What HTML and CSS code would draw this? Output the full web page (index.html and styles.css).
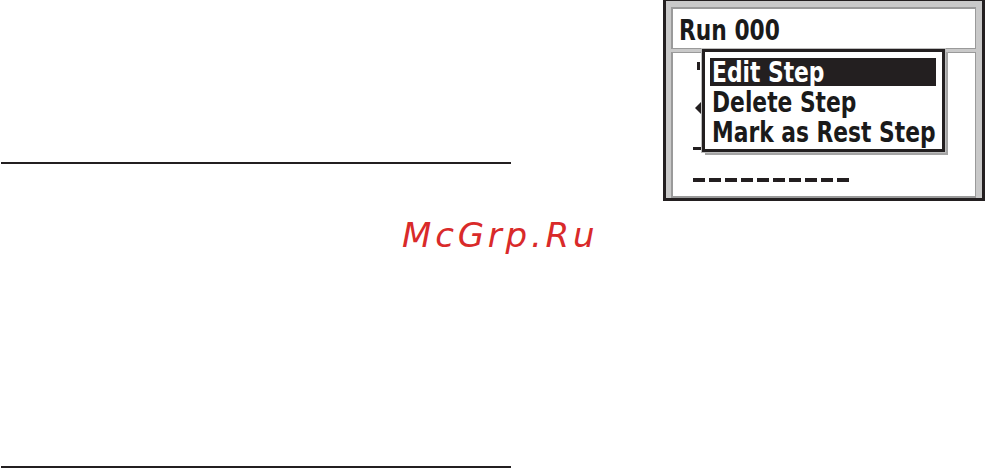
FILE: index.html
```html
<!DOCTYPE html>
<html>
<head>
<meta charset="utf-8">
<link rel="stylesheet" href="styles.css">
</head>
<body>
<div class="page">
  <div class="left">
    <div class="rule rule-top"></div>
    <div class="rule rule-bottom"></div>
  </div>
  <div class="screen">
    <div class="title"><span class="lcd">Run 000</span></div>
    <div class="body">
      <div class="mark mark-bar"></div>
      <div class="mark mark-arrow"></div>
      <div class="mark mark-dash"></div>
      <div class="dashes"></div>
    </div>
    <div class="menu">
      <div class="item selected"><span class="lcd">Edit Step</span></div>
      <div class="item"><span class="lcd">Delete Step</span></div>
      <div class="item"><span class="lcd">Mark as Rest Step</span></div>
    </div>
  </div>
  <div class="watermark">McGrp.Ru</div>
</div>
</body>
</html>
```
FILE: styles.css
```css
html, body {
  margin: 0;
  padding: 0;
  background: #ffffff;
}

.page {
  position: relative;
  display: flex;
  align-items: flex-start;
  width: 985px;
  height: 468px;
  overflow: hidden;
}

.left {
  width: 510px;
  margin-left: 1px;
  display: flex;
  flex-direction: column;
}

.rule {
  height: 2px;
  background: #231f20;
}

.rule-top {
  margin-top: 162px;
}

.rule-bottom {
  margin-top: 302px;
}

.screen {
  position: relative;
  box-sizing: border-box;
  margin-left: 152px;
  width: 322px;
  height: 201px;
  border: 3px solid #231f20;
  border-top-width: 1px;
  background: #c9c9c9;
  padding: 6px 6px 0 5px;
  display: flex;
  flex-direction: column;
  gap: 3px;
  font-family: "DejaVu Sans Condensed", "DejaVu Sans", sans-serif;
  font-stretch: condensed;
  font-weight: bold;
  color: #1a1a1a;
}

.lcd {
  display: inline-block;
  transform: scale(0.95, 1.13);
  transform-origin: 0 50%;
  white-space: nowrap;
}

.title {
  box-sizing: border-box;
  height: 42px;
  background: #ffffff;
  border: 1px solid #9a9a9a;
  border-top-width: 2px;
  border-left-width: 2px;
  padding: 8px 0 0 6px;
  font-size: 25.5px;
  line-height: 26px;
}

.body {
  flex: 1;
  background: #ffffff;
  border: 1px solid #9a9a9a;
  border-left-width: 2px;
  border-bottom-width: 2px;
  display: flex;
  flex-direction: column;
  align-items: flex-start;
  padding-left: 20px;
}

.mark {
  background: #231f20;
}

.mark-bar {
  margin-top: 9px;
  margin-left: 4px;
  width: 3px;
  height: 8px;
}

.mark-arrow {
  margin-top: 32px;
  margin-left: 2px;
  width: 6px;
  height: 12px;
  clip-path: polygon(100% 0, 0 50%, 100% 100%);
}

.mark-dash {
  margin-top: 33px;
  margin-left: 0;
  width: 8px;
  height: 3px;
}

.dashes {
  margin-top: 28px;
  width: 159px;
  height: 4px;
  background: repeating-linear-gradient(90deg, #231f20 0, #231f20 12px, transparent 12px, transparent 16px);
}

.menu {
  position: absolute;
  left: 36px;
  top: 48px;
  box-sizing: border-box;
  width: 243px;
  height: 103px;
  border: 3px solid #231f20;
  background: #ffffff;
  box-shadow: 0 0 0 1px #bdbdbd, 3px 3px 0 0 #a4a4a4;
  padding: 6px 6px 3px 5px;
  display: flex;
  flex-direction: column;
  gap: 2px;
}

.item {
  height: 28px;
  line-height: 28px;
  font-size: 25.5px;
  padding-left: 2px;
  white-space: nowrap;
}

.item.selected {
  background: #231f20;
  color: #ffffff;
}

.watermark {
  position: absolute;
  left: 402px;
  top: 218px;
  font-family: "DejaVu Sans", sans-serif;
  font-style: italic;
  font-size: 34px;
  line-height: 34px;
  letter-spacing: 3.8px;
  color: #d92a2a;
}
```
